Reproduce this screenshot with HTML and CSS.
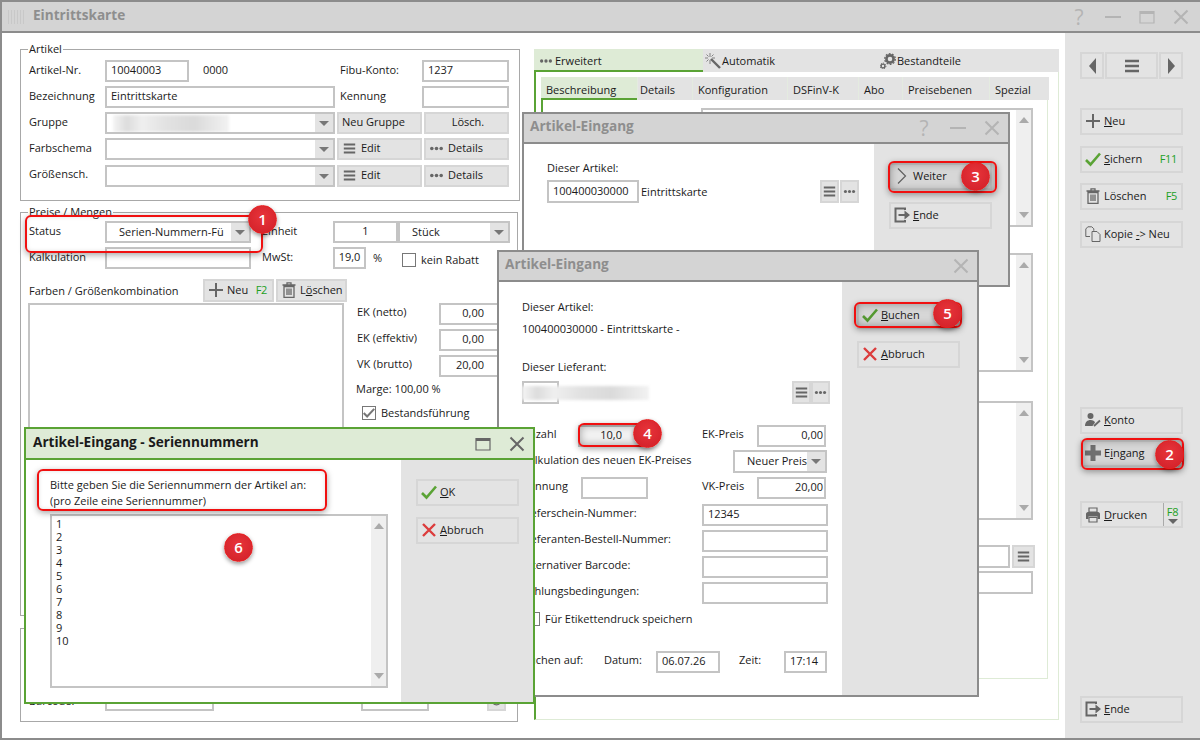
FILE: index.html
```html
<!DOCTYPE html>
<html lang="de">
<head>
    <meta charset="UTF-8">
    <title>Eintrittskarte</title>
    <link rel="stylesheet" href="styles.css">
</head>
<body>
    <svg class="sprites" xmlns="http://www.w3.org/2000/svg">
        <symbol id="i-plus" viewBox="0 0 16 16"><path d="M8 1v14M1 8h14" fill="none" stroke="#666" stroke-width="2"/></symbol>
        <symbol id="i-plus-bold" viewBox="0 0 16 16"><path d="M8 0v16M0 8h16" fill="none" stroke="#777" stroke-width="5"/></symbol>
        <symbol id="i-check" viewBox="0 0 16 16"><path d="M1 9l4.500 4.500L15 2.500" fill="none" stroke="#5aa335" stroke-width="2.600"/></symbol>
        <symbol id="i-tick" viewBox="0 0 16 16"><path d="M1 8l4.500 4.500L15 2.500" fill="none" stroke="#777" stroke-width="2.800"/></symbol>
        <symbol id="i-cross" viewBox="0 0 16 16"><path d="M2 2l12 12M14 2L2 14" fill="none" stroke="#dc3c3c" stroke-width="2.400"/></symbol>
        <symbol id="i-close" viewBox="0 0 16 16"><path d="M1.500 1.500l13 13M14.500 1.500l-13 13" fill="none" stroke="currentColor" stroke-width="2"/></symbol>
        <symbol id="i-min" viewBox="0 0 16 16"><path d="M0 8h16" fill="none" stroke="currentColor" stroke-width="2"/></symbol>
        <symbol id="i-max" viewBox="0 0 16 16"><path d="M1 2.500h14v11.500H1z" fill="none" stroke="currentColor" stroke-width="1.200"/><path d="M1 3.500h14" fill="none" stroke="currentColor" stroke-width="3"/></symbol>
        <symbol id="i-trash" viewBox="0 0 16 16"><path d="M3 4.500h10V15.300H3zM1.500 3h13M6 3V.8h4V3M6 6.500v6.500M8 6.500v6.500M10 6.500v6.500" fill="none" stroke="#666" stroke-width="1.300"/></symbol>
        <symbol id="i-copy" viewBox="0 0 16 16"><path d="M5 10.500H.8V3l2-2.200h4l2 2v2M7 5.500h5l3 3v7H7z" fill="#e3e3e3" stroke="#666" stroke-width="1"/></symbol>
        <symbol id="i-exit" viewBox="0 0 16 16"><path d="M11 3V1.500H1.500v13H11V13" fill="none" stroke="#666" stroke-width="2"/><path d="M4.500 7h6V3.500L16 8l-5.500 4.500V9h-6z" fill="#666"/></symbol>
        <symbol id="i-chevron" viewBox="0 0 16 16"><path d="M4 .5L11.500 8 4 15.500" fill="none" stroke="#666" stroke-width="1.200"/></symbol>
        <symbol id="i-ham" viewBox="0 0 16 16"><path d="M1 3h14M1 8h14M1 13h14" fill="none" stroke="#666" stroke-width="2.500"/></symbol>
        <symbol id="i-dots" viewBox="0 0 16 16"><circle cx="3" cy="8" r="1.900" fill="#666"/><circle cx="8" cy="8" r="1.900" fill="#666"/><circle cx="13" cy="8" r="1.900" fill="#666"/></symbol>
        <symbol id="i-person" viewBox="0 0 16 16"><circle cx="5.500" cy="4" r="3" fill="#666"/><path d="M0 14c0-4 2.500-6 5.500-6 2.500 0 4 1 4.500 2.500L7.500 14z" fill="#666"/><path d="M9 14l6-5.500" fill="none" stroke="#666" stroke-width="1.800"/></symbol>
        <symbol id="i-print" viewBox="0 0 16 16"><path d="M4 1h8v4H4z" fill="none" stroke="#666" stroke-width="1.200"/><path d="M1 10.500V7c0-1 .8-2 2-2h10c1.200 0 2 1 2 2v5h-2.500V9.500h-9V12H1z" fill="#666"/><path d="M4 10.500h8V15H4z" fill="none" stroke="#666" stroke-width="1.200"/></symbol>
        <symbol id="i-wand" viewBox="0 0 16 16"><path d="M6 6l9 9" fill="none" stroke="#666" stroke-width="2.400"/><path d="M5 0v4M5 7v4M0 5h3M7 5h3M1.500 1.500l2 2M8.500 1.500l-2 2M1.500 8.500l2-2" fill="none" stroke="#777" stroke-width=".9"/></symbol>
        <symbol id="i-gears" viewBox="0 0 16 16"><circle cx="10" cy="6" r="3.600" fill="none" stroke="#666" stroke-width="2.600"/><circle cx="10" cy="6" r="5.300" fill="none" stroke="#666" stroke-width="1.300" stroke-dasharray="1.800 1.500"/><circle cx="3" cy="13" r="1.900" fill="none" stroke="#666" stroke-width="1.400"/><circle cx="3" cy="13" r="2.900" fill="none" stroke="#666" stroke-width="1" stroke-dasharray="1.200 1"/></symbol>
        <symbol id="i-ring" viewBox="0 0 16 16"><circle cx="8" cy="8" r="5.500" fill="none" stroke="#666" stroke-width="1.500"/></symbol>
    </svg>

    <div class="desktop">
        <!-- Hauptfenster -->
        <div class="window main-window">
            <div class="titlebar main-title">
                <span class="grip"></span>
                <span class="title-text">Eintrittskarte</span>
                <div class="title-icons">
                    <span class="title-help">?</span>
                    <svg class="ico"><use href="#i-min"/></svg>
                    <svg class="ico"><use href="#i-max"/></svg>
                    <svg class="ico"><use href="#i-close"/></svg>
                </div>
            </div>
            <div class="main-body">
                <div class="left-col">
                    <div class="group group-artikel">
                        <div class="legend">Artikel</div>
                        <div class="artikel-grid">
                            <span class="lbl">Artikel-Nr.</span>
                            <div class="nr-cell"><div class="input nr-input">10040003</div><span>0000</span></div>
                            <span class="lbl lbl-mid">Fibu-Konto:</span>
                            <div class="input">1237</div>

                            <span class="lbl">Bezeichnung</span>
                            <div class="input field-wide">Eintrittskarte</div>
                            <span class="lbl lbl-mid">Kennung</span>
                            <div class="input"></div>

                            <span class="lbl">Gruppe</span>
                            <div class="combo field-wide"><div class="combo-text"><div class="blur blur-gruppe"></div></div><span class="combo-btn"><i class="tri-down"></i></span></div>
                            <div class="btn btn-form">Neu Gruppe</div>
                            <div class="btn btn-form btn-form-r btn-center">Lösch.</div>

                            <span class="lbl">Farbschema</span>
                            <div class="combo field-wide"><div class="combo-text"></div><span class="combo-btn"><i class="tri-down"></i></span></div>
                            <div class="btn btn-form"><svg class="ico ico-ham"><use href="#i-ham"/></svg>Edit</div>
                            <div class="btn btn-form btn-form-r"><svg class="ico ico-dots"><use href="#i-dots"/></svg>Details</div>

                            <span class="lbl lbl-up">Größensch.</span>
                            <div class="combo field-wide"><div class="combo-text"></div><span class="combo-btn"><i class="tri-down"></i></span></div>
                            <div class="btn btn-form"><svg class="ico ico-ham"><use href="#i-ham"/></svg>Edit</div>
                            <div class="btn btn-form btn-form-r"><svg class="ico ico-dots"><use href="#i-dots"/></svg>Details</div>
                        </div>
                    </div>

                    <div class="group group-preise">
                        <div class="legend">Preise / Mengen</div>
                        <div class="preise-grid">
                            <span class="lbl">Status</span>
                            <div class="combo"><div class="combo-text">Serien-Nummern-Fü</div><span class="combo-btn"><i class="tri-down"></i></span></div>
                            <span class="lbl">Einheit</span>
                            <div class="input input-center">1</div>
                            <div class="combo"><div class="combo-text">Stück</div><span class="combo-btn"><i class="tri-down"></i></span></div>

                            <span class="lbl">Kalkulation</span>
                            <div class="input kalk-input"></div>
                            <span class="lbl">MwSt:</span>
                            <div class="mwst-cell"><div class="input input-center mwst-input">19,0</div><span>%</span></div>
                            <label class="check-row rabatt"><i class="check-box"></i>kein Rabatt</label>
                        </div>
                        <div class="farben-row">
                            <span class="farben-lbl">Farben / Größenkombination</span>
                            <div class="btn btn-farben"><svg class="ico"><use href="#i-plus"/></svg>Neu<span class="fkey">F2</span></div>
                            <div class="btn btn-farben"><svg class="ico"><use href="#i-trash"/></svg><span>L<u>ö</u>schen</span></div>
                        </div>
                        <div class="preise-lower">
                            <div class="input listbox"></div>
                            <div class="price-col">
                                <div class="price-row"><span>EK (netto)</span><div class="input input-right">0,00</div></div>
                                <div class="price-row"><span>EK (effektiv)</span><div class="input input-right">0,00</div></div>
                                <div class="price-row"><span>VK (brutto)</span><div class="input input-right">20,00</div></div>
                                <div class="marge">Marge: 100,00 %</div>
                                <label class="check-row bestand"><i class="check-box"><svg class="ico ico-tick"><use href="#i-tick"/></svg></i>Bestandsführung</label>
                            </div>
                        </div>
                    </div>

                    <div class="group group-barcode">
                        <div class="barcode-row">
                            <span class="barcode-lbl">Barcode:</span>
                            <div class="input barcode-a"></div>
                            <div class="input barcode-b"></div>
                            <div class="btn barcode-btn"><svg class="ico"><use href="#i-ring"/></svg></div>
                        </div>
                    </div>
                </div>

                <div class="tabs-col">
                    <div class="tab-row">
                        <div class="tab tab-active tab-erw"><svg class="ico ico-dots"><use href="#i-dots"/></svg>Erweitert</div>
                        <div class="tab tab-auto"><svg class="ico"><use href="#i-wand"/></svg>Automatik</div>
                        <div class="tab tab-rest"><svg class="ico"><use href="#i-gears"/></svg>Bestandteile</div>
                    </div>
                    <div class="tab-panel">
                        <div class="subtab-row">
                            <div class="subtab subtab-active st-1">Beschreibung</div>
                            <div class="subtab st-2">Details</div>
                            <div class="subtab st-3">Konfiguration</div>
                            <div class="subtab st-4">DSFinV-K</div>
                            <div class="subtab st-5">Abo</div>
                            <div class="subtab st-6">Preisebenen</div>
                            <div class="subtab st-7">Spezial</div>
                        </div>
                        <div class="subtab-panel">
                            <div class="memo memo-1"><div class="scrollbar"><i class="tri-up"></i><i class="tri-down"></i></div></div>
                            <div class="memo memo-2"><div class="scrollbar"><i class="tri-up"></i><i class="tri-down"></i></div></div>
                            <div class="memo memo-3"><div class="scrollbar"><i class="tri-up"></i><i class="tri-down"></i></div></div>
                            <div class="memo-input-row">
                                <div class="input"></div>
                                <div class="btn icon-btn"><svg class="ico"><use href="#i-ham"/></svg></div>
                            </div>
                            <div class="input memo-input-2"></div>
                        </div>
                    </div>
                </div>

                <div class="sidebar">
                    <div class="nav-row">
                        <div class="btn nav-arrow"><i class="tri-left"></i></div>
                        <div class="btn nav-mid"><svg class="ico"><use href="#i-ham"/></svg></div>
                        <div class="btn nav-arrow"><i class="tri-right"></i></div>
                    </div>
                    <div class="btn side-btn s-neu"><svg class="ico"><use href="#i-plus"/></svg><span><u>N</u>eu</span></div>
                    <div class="btn side-btn s-sichern"><svg class="ico"><use href="#i-check"/></svg><span><u>S</u>ichern</span><span class="fkey">F11</span></div>
                    <div class="btn side-btn s-loeschen"><svg class="ico"><use href="#i-trash"/></svg><span>Löschen</span><span class="fkey">F5</span></div>
                    <div class="btn side-btn s-kopie"><svg class="ico"><use href="#i-copy"/></svg><span>Kopie <u>-</u>&gt; Neu</span></div>
                    <div class="btn side-btn s-konto"><svg class="ico"><use href="#i-person"/></svg><span><u>K</u>onto</span></div>
                    <div class="btn side-btn s-eingang"><svg class="ico"><use href="#i-plus-bold"/></svg><span>E<u>i</u>ngang</span></div>
                    <div class="btn side-btn s-drucken"><svg class="ico"><use href="#i-print"/></svg><span><u>D</u>rucken</span>
                        <div class="print-key"><span class="fkey">F8</span><i class="tri-down"></i></div>
                    </div>
                    <div class="btn side-btn s-ende"><svg class="ico"><use href="#i-exit"/></svg><span><u>E</u>nde</span></div>
                </div>
            </div>
        </div>

        <!-- Dialog: Artikel-Eingang (Weiter) -->
        <div class="window dialog dlg-weiter">
            <div class="titlebar">
                <span class="title-text">Artikel-Eingang</span>
                <div class="title-icons">
                    <span class="title-help">?</span>
                    <svg class="ico"><use href="#i-min"/></svg>
                    <svg class="ico"><use href="#i-close"/></svg>
                </div>
            </div>
            <div class="dialog-body">
                <div class="dialog-content weiter-content">
                    <div>Dieser Artikel:</div>
                    <div class="weiter-row">
                        <div class="input weiter-input">100400030000</div>
                        <span>Eintrittskarte</span>
                        <div class="btn icon-btn weiter-ham"><svg class="ico"><use href="#i-ham"/></svg></div>
                        <div class="btn icon-btn"><svg class="ico ico-dots"><use href="#i-dots"/></svg></div>
                    </div>
                </div>
                <div class="dialog-side">
                    <div class="btn side-btn"><svg class="ico"><use href="#i-chevron"/></svg><span>Weiter</span></div>
                    <div class="btn side-btn"><svg class="ico"><use href="#i-exit"/></svg><span><u>E</u>nde</span></div>
                </div>
            </div>
        </div>

        <!-- Dialog: Artikel-Eingang (Buchen) -->
        <div class="window dialog dlg-buchen">
            <div class="titlebar">
                <span class="title-text">Artikel-Eingang</span>
                <div class="title-icons">
                    <svg class="ico"><use href="#i-close"/></svg>
                </div>
            </div>
            <div class="dialog-body">
                <div class="dialog-content buchen-content">
                    <div class="line line-a">Dieser Artikel:</div>
                    <div class="line line-b">100400030000 - Eintrittskarte -</div>
                    <div class="line line-c">Dieser Lieferant:</div>
                    <div class="lief-row">
                        <div class="input lief-input"></div>
                        <div class="blur blur-lief"></div>
                        <div class="btn icon-btn lief-ham"><svg class="ico"><use href="#i-ham"/></svg></div>
                        <div class="btn icon-btn"><svg class="ico ico-dots"><use href="#i-dots"/></svg></div>
                    </div>
                    <div class="form-row r-anzahl">
                        <span class="c-anzahl">Anzahl</span>
                        <div class="input input-right anzahl-input">10,0</div>
                        <span class="c-ek">EK-Preis</span>
                        <div class="input input-right preis-input">0,00</div>
                    </div>
                    <div class="form-row r-kalk">
                        <span class="c-kalk">Kalkulation des neuen EK-Preises</span>
                        <div class="combo kalk-combo"><div class="combo-text">Neuer Preis</div><span class="combo-btn"><i class="tri-down"></i></span></div>
                    </div>
                    <div class="form-row r-kenn">
                        <span class="c-kenn">Kennung</span>
                        <div class="input kenn-input"></div>
                        <span class="c-vk">VK-Preis</span>
                        <div class="input input-right preis-input">20,00</div>
                    </div>
                    <div class="form-row r-l1"><span class="c-long">Lieferschein-Nummer:</span><div class="input long-input">12345</div></div>
                    <div class="form-row r-l2"><span class="c-long">Lieferanten-Bestell-Nummer:</span><div class="input long-input"></div></div>
                    <div class="form-row r-l3"><span class="c-long">Alternativer Barcode:</span><div class="input long-input"></div></div>
                    <div class="form-row r-l4"><span class="c-long">Zahlungsbedingungen:</span><div class="input long-input"></div></div>
                    <label class="check-row etikett"><i class="check-box"></i>Für Etikettendruck speichern</label>
                    <div class="form-row r-datum">
                        <span class="c-buchen">Buchen auf:</span>
                        <span class="c-datum">Datum:</span>
                        <div class="input datum-input">06.07.26</div>
                        <span class="c-zeit">Zeit:</span>
                        <div class="input zeit-input">17:14</div>
                    </div>
                </div>
                <div class="dialog-side">
                    <div class="btn side-btn"><svg class="ico"><use href="#i-check"/></svg><span><u>B</u>uchen</span></div>
                    <div class="btn side-btn"><svg class="ico"><use href="#i-cross"/></svg><span><u>A</u>bbruch</span></div>
                </div>
            </div>
        </div>

        <!-- Dialog: Seriennummern -->
        <div class="window dialog dlg-serien">
            <div class="titlebar">
                <span class="title-text">Artikel-Eingang - Seriennummern</span>
                <div class="title-icons">
                    <svg class="ico"><use href="#i-max"/></svg>
                    <svg class="ico"><use href="#i-close"/></svg>
                </div>
            </div>
            <div class="dialog-body">
                <div class="dialog-content serien-content">
                    <p class="serien-text">Bitte geben Sie die Seriennummern der Artikel an:<br>(pro Zeile eine Seriennummer)</p>
                    <div class="memo serien-memo">
                        <div class="serien-lines">1<br>2<br>3<br>4<br>5<br>6<br>7<br>8<br>9<br>10</div>
                        <div class="scrollbar"><i class="tri-up"></i><i class="tri-down"></i></div>
                    </div>
                </div>
                <div class="dialog-side">
                    <div class="btn side-btn"><svg class="ico"><use href="#i-check"/></svg><span><u>O</u>K</span></div>
                    <div class="btn side-btn"><svg class="ico"><use href="#i-cross"/></svg><span><u>A</u>bbruch</span></div>
                </div>
            </div>
        </div>

        <!-- Markierungen -->
        <div class="mark mark-1"></div>
        <div class="mark mark-btn mark-2"></div>
        <div class="mark mark-btn mark-3"></div>
        <div class="mark mark-btn mark-4"></div>
        <div class="mark mark-btn mark-5"></div>
        <div class="mark mark-6"></div>
        <div class="badge badge-1">1</div>
        <div class="badge badge-2">2</div>
        <div class="badge badge-3">3</div>
        <div class="badge badge-4">4</div>
        <div class="badge badge-5">5</div>
        <div class="badge badge-6">6</div>
    </div>
</body>
</html>
```

FILE: styles.css
```css
/* Allgemein */
* {
    box-sizing: border-box;
}

body {
    margin: 0;
    font-family: "Open Sans", sans-serif;
    font-size: 11px;
    line-height: 14px;
    color: #1a1a1a;
    background-color: #fff;
}

.sprites {
    position: absolute;
    width: 0;
    height: 0;
}

.desktop {
    position: relative;
    width: 1200px;
    height: 740px;
    overflow: hidden;
}

.ico {
    display: block;
    width: 16px;
    height: 16px;
    flex: none;
}

/* Fenster */
.window {
    display: flex;
    flex-direction: column;
    background-color: #fff;
    border: 2px solid #8c8c8c;
}

.main-window {
    width: 1200px;
    height: 740px;
    border-right: none;
}

.titlebar {
    display: flex;
    align-items: center;
    flex: none;
    height: 30px;
    padding: 0 8px 0 6px;
    background-color: #d4d4d4;
    border-bottom: 2px solid #8c8c8c;
}

.main-title {
    height: 31px;
    padding: 0 11px 0 6px;
}

.grip {
    width: 16px;
    height: 14px;
    margin-right: 9px;
    background: repeating-linear-gradient(90deg, #c8c8c8 0, #c8c8c8 1px, transparent 1px, transparent 3px);
}

.title-text {
    padding-bottom: 4px;
    font-size: 13.6px;
    font-weight: 700;
    color: #8e8e8e;
}

.title-icons {
    display: flex;
    align-items: center;
    gap: 18px;
    margin-left: auto;
    color: #b4b4b4;
}

.title-help {
    width: 16px;
    font-size: 21px;
    line-height: 24px;
    text-align: center;
}

.main-body {
    display: flex;
    flex: 1;
    min-height: 0;
}

/* Eingabefelder */
.input {
    display: flex;
    align-items: center;
    height: 22px;
    padding: 0 4px 2px;
    background-color: #fff;
    border: 2px solid #c4c4c4;
}

.input-center {
    justify-content: center;
}

.input-right {
    justify-content: flex-end;
}

.combo {
    display: flex;
    height: 23px;
    background-color: #fff;
    border: 2px solid #c4c4c4;
}

.combo-text {
    flex: 1;
    min-width: 0;
    padding-left: 12px;
    line-height: 17px;
    white-space: nowrap;
    overflow: hidden;
}

.combo-btn {
    display: flex;
    align-items: center;
    justify-content: center;
    flex: none;
    width: 18px;
    background-color: #e3e3e3;
}

.tri-down,
.tri-up {
    display: block;
    width: 0;
    height: 0;
    border-left: 5px solid transparent;
    border-right: 5px solid transparent;
}

.combo-btn .tri-down {
    border-top: 5px solid #777;
}

.tri-left,
.tri-right {
    display: block;
    width: 0;
    height: 0;
    border-top: 8px solid transparent;
    border-bottom: 8px solid transparent;
}

.tri-left {
    border-right: 7px solid #666;
}

.tri-right {
    border-left: 7px solid #666;
}

.blur {
    filter: blur(1.5px);
    background: linear-gradient(90deg, #f4f4f4 0, #dcdcdc 12%, #efefef 25%, #e2e2e2 45%, #dadada 70%, #f2f2f2 100%);
}

.blur-gruppe {
    width: 116px;
    height: 17px;
    margin: 1px 0 0 -6px;
}

.blur-lief {
    width: 127px;
    height: 14px;
    margin-left: -37px;
}

/* Schaltflächen */
.btn {
    display: flex;
    align-items: center;
    height: 27px;
    padding-bottom: 2px;
    background-color: #e3e3e3;
    border: 2px solid #d6d6d6;
}

.btn-form {
    height: 23px;
    padding-left: 3px;
}

.btn-form-r {
    margin-left: 2px;
}

.btn-center {
    justify-content: center;
}

.ico-ham {
    width: 13px;
    height: 13px;
    margin: 0 5px 0 1px;
}

.ico-dots {
    width: 15px;
    height: 15px;
    margin: 0 4px 0 0;
}

.icon-btn {
    justify-content: center;
    width: 19px;
    height: 23px;
    padding-bottom: 0;
}

.icon-btn .ico {
    width: 13px;
    height: 13px;
    margin: 0;
}

.fkey {
    margin-left: auto;
    letter-spacing: -0.3px;
    color: #1ea01e;
}

/* Gruppen links */
.left-col {
    flex: none;
    width: 532px;
    padding: 16px 0 0 18px;
}

.group {
    border: 1px solid #a8a8a8;
    padding-left: 8px;
}

.legend {
    width: fit-content;
    margin: -8px 0 0 -1px;
    padding: 0 1px;
    background-color: #fff;
}

.group-artikel {
    width: 500px;
    height: 152px;
}

.lbl {
    align-self: start;
    line-height: 20px;
}

.lbl-mid {
    padding-left: 3px;
}

.lbl-up {
    margin-top: -1px;
}

.artikel-grid {
    display: grid;
    grid-template-columns: 76px 232px 85px 87px;
    grid-template-rows: 26px 26px 26px 27px 22px;
    margin-top: 4px;
}

.artikel-grid > .input,
.artikel-grid > .combo,
.artikel-grid > .btn {
    height: 22px;
}

.field-wide {
    width: 230px;
}

.nr-cell {
    display: flex;
    align-items: flex-start;
    gap: 14px;
}

.nr-cell > span {
    line-height: 20px;
}

.nr-input {
    width: 84px;
}

.group-preise {
    width: 498px;
    height: 404px;
    margin-top: 11px;
}

.preise-grid {
    display: grid;
    grid-template-columns: 76px 157px 71px 65px 112px;
    grid-template-rows: 26px 22px;
    margin-top: 2px;
}

.preise-grid > .input,
.preise-grid > .combo {
    height: 22px;
}

.preise-grid > .combo:first-of-type,
.kalk-input {
    width: 146px;
}

.mwst-cell {
    display: flex;
    align-items: center;
    gap: 7px;
}

.mwst-input {
    width: 33px;
    padding: 0 0 2px;
}

.check-row {
    display: flex;
    align-items: center;
    gap: 5px;
}

.check-box {
    display: block;
    flex: none;
    width: 14px;
    height: 14px;
    background-color: #fff;
    border: 1px solid #777;
}

.rabatt {
    padding: 3px 0 0 4px;
}

.farben-row {
    display: flex;
    align-items: center;
    gap: 2px;
    margin-top: 10px;
}

.farben-lbl {
    width: 172px;
}

.btn-farben {
    gap: 3px;
    width: 71px;
    height: 23px;
    padding: 0 5px 2px 3px;
    white-space: nowrap;
}

.preise-lower {
    display: flex;
    margin-top: 1px;
}

.listbox {
    flex: none;
    width: 316px;
    height: 300px;
    margin-left: -1px;
}

.price-col {
    margin-left: 13px;
}

.price-row {
    display: flex;
    align-items: center;
    height: 22px;
    margin-bottom: 4px;
}

.price-row span {
    flex: none;
    width: 82px;
    margin-top: -4px;
}

.price-row .input {
    width: 70px;
    padding-right: 23px;
}

.marge {
    margin: 5px 0 0 -1px;
}

.bestand {
    margin: 10px 0 0 5px;
}

.ico-tick {
    width: 12px;
    height: 12px;
}

.group-barcode {
    width: 498px;
    height: 94px;
    margin-top: 12px;
}

.barcode-row {
    display: flex;
    align-items: center;
    margin-top: 60px;
}

.barcode-lbl {
    width: 76px;
    padding-top: 2px;
}

.barcode-a {
    width: 109px;
}

.barcode-b {
    width: 68px;
    margin-left: 147px;
}

.barcode-btn {
    justify-content: center;
    width: 19px;
    height: 22px;
    margin-left: 58px;
    padding-bottom: 0;
}

.barcode-btn .ico {
    width: 13px;
    height: 13px;
}

/* Register rechts */
.tabs-col {
    display: flex;
    flex-direction: column;
    flex: none;
    width: 525px;
    height: 671px;
    margin-top: 16px;
}

.tab-row {
    display: flex;
    flex: none;
    height: 23px;
    background-color: #e3e3e3;
}

.tab {
    display: flex;
    align-items: center;
    padding: 1px 0 0 2px;
}

.tab .ico {
    margin-right: 1px;
}

.tab-erw {
    width: 169px;
    padding: 2px 0 0 5px;
}

.tab-erw .ico-dots {
    width: 14px;
    height: 14px;
    margin: 0 2px 0 0;
}

.tab-auto {
    width: 175px;
}

.tab-active {
    background-color: #deebd6;
    border-bottom: 2px solid #5aa335;
}

.tab-panel {
    flex: 1;
    padding: 5px 0 0 5px;
    border-left: 2px solid #5aa335;
    border-right: 1px solid #deebd6;
    border-bottom: 1px solid #deebd6;
}

.subtab-row {
    display: flex;
    width: 508px;
    height: 23px;
    background-color: #e3e3e3;
}

.subtab {
    flex: none;
    padding: 6px 0 0 5px;
}

.subtab + .subtab {
    box-shadow: inset 1px 0 0 #e4ebe0;
}

.subtab-active {
    background-color: #deebd6;
    border-bottom: 2px solid #5aa335;
}

.st-1 { width: 96px; }
.st-2 { width: 55px; padding-left: 3px; }
.st-3 { width: 95px; padding-left: 6px; }
.st-4 { width: 71px; padding-left: 6px; }
.st-5 { width: 44px; padding-left: 6px; }
.st-6 { width: 87px; padding-left: 6px; }
.st-7 { width: 60px; padding-left: 6px; }

.subtab-panel {
    width: 507px;
    height: 579px;
    padding: 8px 0 0 158px;
    border-left: 2px solid #5aa335;
    border-right: 1px solid #deebd6;
    border-bottom: 1px solid #deebd6;
}

.memo {
    display: flex;
    justify-content: flex-end;
    width: 332px;
    background-color: #fff;
    border: 2px solid #c4c4c4;
}

.memo-1 { height: 119px; }
.memo-2 { height: 119px; margin-top: 26px; }
.memo-3 { height: 119px; margin-top: 29px; }

.scrollbar {
    display: flex;
    flex-direction: column;
    align-items: center;
    justify-content: space-between;
    flex: none;
    width: 15px;
    padding: 7px 0;
    background-color: #efefef;
}

.scrollbar .tri-up {
    border-bottom: 6px solid #aaa;
}

.scrollbar .tri-down {
    border-top: 6px solid #aaa;
}

.memo-input-row {
    display: flex;
    gap: 2px;
    margin-top: 25px;
}

.memo-input-row .input {
    width: 309px;
    height: 23px;
}

.memo-input-row .icon-btn {
    width: 23px;
}

.memo-input-2 {
    width: 332px;
    height: 23px;
    margin-top: 3px;
}

/* Seitenleiste */
.sidebar {
    display: flex;
    flex-direction: column;
    flex: none;
    width: 135px;
    margin-left: 6px;
    padding: 19px 0 0 15px;
    background-color: #e3e3e3;
}

.nav-row {
    display: flex;
    gap: 1px;
    width: 103px;
    height: 27px;
}

.nav-arrow {
    justify-content: center;
    width: 24px;
    padding-bottom: 0;
    background-color: #e3e3e3;
}

.nav-mid {
    justify-content: center;
    flex: 1;
    padding-bottom: 0;
}

.side-btn {
    gap: 3px;
    width: 103px;
    padding: 0 4px 2px 3px;
}

.s-neu { margin-top: 29px; }
.s-sichern { margin-top: 11px; }
.s-loeschen { margin-top: 10px; }
.s-kopie { margin-top: 11px; }
.s-konto { margin-top: 159px; }
.s-eingang { margin-top: 6px; }
.s-drucken { margin-top: 34px; padding-right: 0; padding-bottom: 0; }
.s-ende { margin-top: 168px; }

.print-key {
    display: flex;
    flex-direction: column;
    align-items: center;
    width: 18px;
    height: 23px;
    margin-left: auto;
    padding-top: 2px;
    border-left: 1px solid #aaa;
    line-height: 13px;
}

.print-key .tri-down {
    margin-top: 1px;
    border-top: 5px solid #666;
}

.print-key .fkey {
    margin: 0;
}

/* Dialoge */
.dialog {
    position: absolute;
}

.dialog-body {
    display: flex;
    flex: 1;
    min-height: 0;
}

.dialog-content {
    flex: 1;
    min-width: 0;
}

.dialog-side {
    display: flex;
    flex-direction: column;
    flex: none;
    width: 134px;
    padding: 19px 0 0 15px;
    background-color: #e3e3e3;
}

.dlg-weiter {
    left: 522px;
    top: 112px;
    width: 488px;
    height: 175px;
}

.dlg-weiter .side-btn + .side-btn {
    margin-top: 12px;
}

.weiter-content {
    padding: 17px 0 0 23px;
}

.weiter-row {
    display: flex;
    align-items: center;
    margin-top: 5px;
}

.weiter-input {
    width: 92px;
    height: 23px;
    margin-right: 2px;
}

.weiter-ham {
    margin-left: auto;
    margin-right: 1px;
}

.weiter-row .icon-btn:last-child {
    margin-right: 15px;
}

.dlg-buchen {
    left: 497px;
    top: 250px;
    width: 482px;
    height: 447px;
}

.dlg-buchen .dialog-side {
    width: 135px;
    padding-top: 20px;
}

.dlg-buchen .side-btn + .side-btn {
    margin-top: 12px;
}

.buchen-content {
    padding: 18px 0 0 23px;
}

.line-b { margin-top: 8px; }
.line-c { margin-top: 24px; }

.lief-row {
    display: flex;
    align-items: center;
    height: 23px;
    margin-top: 7px;
}

.lief-input {
    width: 37px;
    height: 23px;
}

.lief-ham {
    margin-left: 143px;
    margin-right: 0;
}

.form-row {
    display: flex;
    align-items: center;
    height: 23px;
}

.form-row > span {
    flex: none;
    margin-top: -4px;
}

.r-anzahl { margin-top: 20px; }
.c-anzahl { width: 56px; }
.anzahl-input { width: 75px; padding-right: 29px; }
.c-ek { width: 55px; margin-left: 49px; }
.preis-input { width: 69px; padding-right: 1px; }
.r-kalk { margin-top: 3px; }
.c-kalk { width: 211px; }
.kalk-combo { width: 94px; }
.r-kenn { margin-top: 3px; }
.c-kenn { width: 59px; }
.kenn-input { width: 67px; }
.c-vk { width: 55px; margin-left: 54px; }
.c-long { width: 180px; }
.long-input { width: 126px; height: 22px; }
.r-l1 { margin-top: 4px; }
.r-l2 { margin-top: 3px; }
.r-l3 { margin-top: 3px; }
.r-l4 { margin-top: 3px; }

.etikett {
    margin: 8px 0 0 4px;
}

.r-datum { height: 22px; margin-top: 25px; }
.c-buchen { width: 82px; }
.c-datum { width: 52px; }
.datum-input { width: 64px; }
.c-zeit { width: 45px; margin-left: 19px; }
.zeit-input { width: 43px; }

.dlg-serien {
    left: 24px;
    top: 427px;
    width: 511px;
    height: 277px;
    border-color: #5aa335;
}

.dlg-serien .titlebar {
    height: 31px;
    padding-left: 7px;
    background-color: #deebd6;
    border-bottom-color: #5aa335;
}

.dlg-serien .title-text {
    color: #1a1a1a;
}

.dlg-serien .title-icons {
    color: #666;
}

.dlg-serien .dialog-side {
    width: 132px;
}

.dlg-serien .side-btn + .side-btn {
    margin-top: 11px;
}

.serien-content {
    padding: 17px 0 0 24px;
}

.serien-text {
    margin: 0;
    line-height: 16px;
}

.serien-memo {
    justify-content: space-between;
    width: 338px;
    height: 174px;
    margin-top: 5px;
}

.serien-lines {
    padding: 1px 0 0 4px;
    line-height: 13px;
}

/* Markierungen */
.mark {
    position: absolute;
    border: 2px solid #f01010;
    border-radius: 6px;
    box-shadow: 0 2px 6px rgba(0, 0, 0, 0.35), inset 0 0 4px rgba(0, 0, 0, 0.12);
}

.mark-btn {
    background-color: rgba(0, 0, 0, 0.05);
    box-shadow: 0 2px 6px rgba(0, 0, 0, 0.35), inset 0 0 8px rgba(0, 0, 0, 0.35);
}

.mark-1 { left: 25px; top: 215px; width: 238px; height: 38px; }
.mark-2 { left: 1081px; top: 438px; width: 103px; height: 32px; }
.mark-3 { left: 888px; top: 161px; width: 109px; height: 32px; }
.mark-4 { left: 578px; top: 423px; width: 75px; height: 24px; }
.mark-5 { left: 854px; top: 302px; width: 108px; height: 26px; }
.mark-6 { left: 37px; top: 469px; width: 290px; height: 42px; }

.badge {
    position: absolute;
    width: 29px;
    height: 29px;
    font-size: 15px;
    font-weight: 600;
    line-height: 27px;
    text-align: center;
    color: #fff;
    background: radial-gradient(circle at 50% 40%, #e8343a, #cf1f28);
    border: 1px solid #e62020;
    border-radius: 50%;
    box-shadow: 0 2px 4px rgba(0, 0, 0, 0.4);
}

.badge-1 { left: 248px; top: 205px; }
.badge-2 { left: 1155px; top: 440px; }
.badge-3 { left: 961px; top: 162px; }
.badge-4 { left: 633px; top: 419px; }
.badge-5 { left: 933px; top: 299px; }
.badge-6 { left: 224px; top: 533px; }
```
